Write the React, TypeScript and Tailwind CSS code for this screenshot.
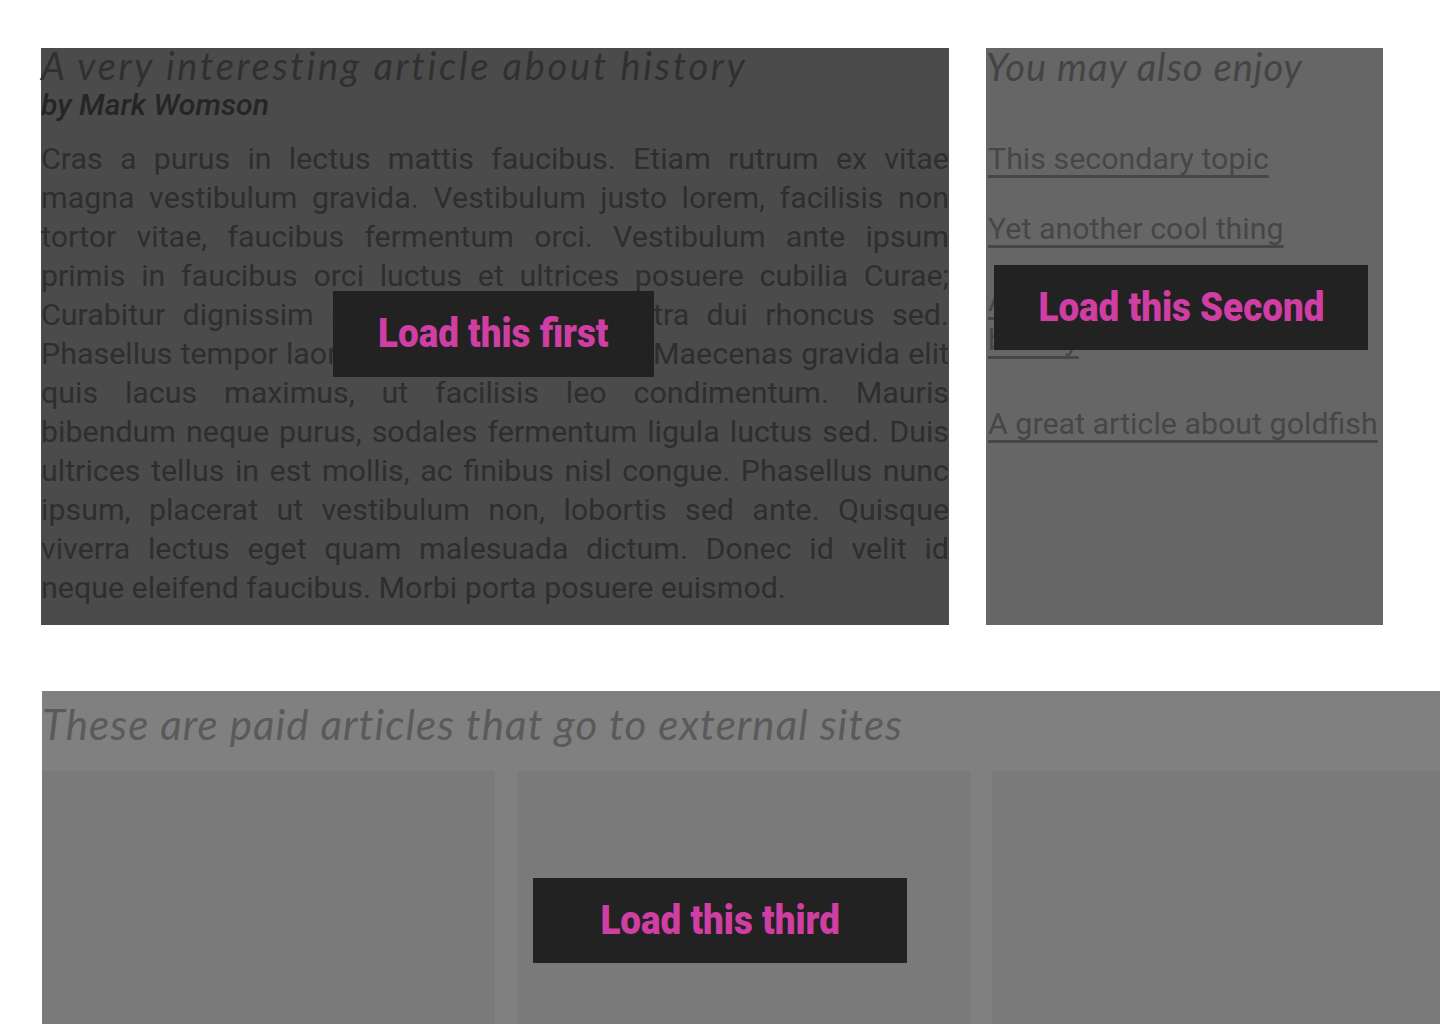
// App.tsx
const titleFont = "font-['Lato','Open_Sans',sans-serif] italic";
const bodyFont = "font-['Roboto','Liberation_Sans',sans-serif]";

function LoadButton({ label, className }: { label: string; className: string }) {
  return (
    <div
      className={`absolute flex items-center justify-center bg-[#222222] ${className}`}
    >
      {/* condensed heavy label */}
      <span className="inline-block scale-x-[0.92] font-['Roboto',sans-serif] font-black text-[40px] leading-none text-[#cf3ea3] whitespace-nowrap">
        {label}
      </span>
    </div>
  );
}

export default function App() {
  return (
    <div className="w-[1440px] h-[1024px] overflow-hidden bg-white">
      {/* top row: article + sidebar */}
      <div className="flex pt-[48px] pl-[41px] gap-[37px]">
        <article className="relative w-[908px] h-[577px] bg-[#4b4b4b]">
          <h1
            className={`${titleFont} text-[38px] leading-[34px] text-[#303030] tracking-[2.7px]`}
          >
            A very interesting article about history
          </h1>
          <div
            className={`${bodyFont} mt-[3px] italic font-medium text-[30.2px] leading-[40px] text-[#252525]`}
          >
            by Mark Womson
          </div>
          <p
            className={`${bodyFont} mt-[14px] text-[30.4px] leading-[39px] text-[#2e2e2e] text-justify`}
          >
            Cras a purus in lectus mattis faucibus. Etiam rutrum ex vitae magna vestibulum
            gravida. Vestibulum justo lorem, facilisis non tortor vitae, faucibus fermentum
            orci. Vestibulum ante ipsum primis in faucibus orci luctus et ultrices posuere
            cubilia Curae; Curabitur dignissim nisl quis viverra pharetra dui rhoncus sed.
            Phasellus tempor laoreet lorem vel tincidunt. Maecenas gravida elit quis lacus
            maximus, ut facilisis leo condimentum. Mauris bibendum neque purus, sodales
            fermentum ligula luctus sed. Duis ultrices tellus in est mollis, ac finibus nisl
            congue. Phasellus nunc ipsum, placerat ut vestibulum non, lobortis sed ante.
            Quisque viverra lectus eget quam malesuada dictum. Donec id velit id{" "}
            <span className="inline-block">neque eleifend faucibus. Morbi porta posuere euismod.</span>
          </p>
          <LoadButton label="Load this first" className="left-[292px] top-[243px] w-[321px] h-[86px]" />
        </article>

        <aside className="relative w-[397px] h-[577px] bg-[#666666]">
          <h2 className={`${titleFont} text-[38px] leading-[36px] tracking-[1px] text-[#444444]`}>
            You may also enjoy
          </h2>
          <ul className={`${bodyFont} mt-[55px] pl-[2px] text-[30.4px] leading-[39px] text-[#464646]`}>
            <li>
              <a className="underline underline-offset-[6px]">This secondary topic</a>
            </li>
            <li className="mt-[31px]">
              <a className="underline underline-offset-[6px]">Yet another cool thing</a>
            </li>
            <li className="mt-[33px]">
              <a className="underline underline-offset-[6px]">
                A short history of everyday beauty
              </a>
            </li>
            <li className="mt-[45px]">
              <a className="underline underline-offset-[6px]">A great article about goldfish</a>
            </li>
          </ul>
          <LoadButton label="Load this Second" className="left-[8px] top-[217px] w-[374px] h-[85px]" />
        </aside>
      </div>

      {/* paid articles */}
      <section className="mt-[66px] ml-[42px] w-[1420px] bg-[#808080]">
        <div className="h-[80px]">
          <h3 className={`${titleFont} text-[42px] leading-[66px] text-[#5a5a5a] tracking-[1.1px]`}>
            These are paid articles that go to external sites
          </h3>
        </div>
        <div className="flex gap-[22px]">
          <div className="w-[453px] h-[260px] bg-[#7a7a7a]" />
          <div className="relative w-[453px] h-[260px] bg-[#7a7a7a]">
            <LoadButton label="Load this third" className="left-[16px] top-[107px] w-[374px] h-[85px]" />
          </div>
          <div className="w-[453px] h-[260px] bg-[#7a7a7a]" />
        </div>
      </section>
    </div>
  );
}
